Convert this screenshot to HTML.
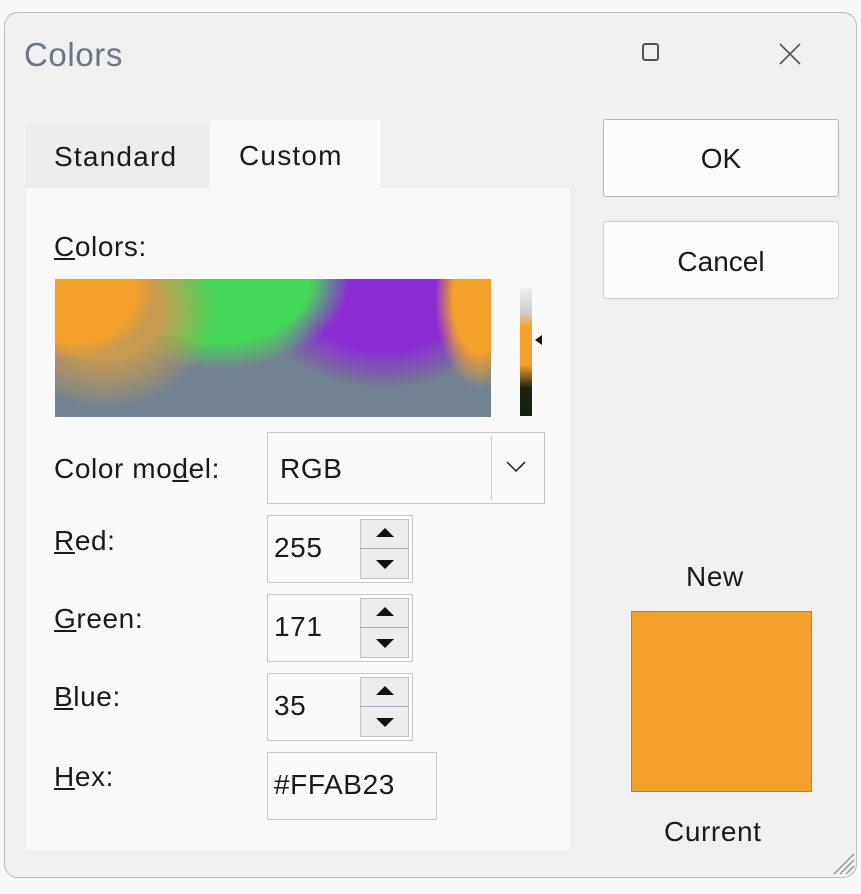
<!DOCTYPE html>
<html><head><style>
body{margin:0;width:861px;height:894px;background:#f7f7f7;font-family:"Liberation Sans",sans-serif;position:relative;overflow:hidden}
.a{position:absolute}
.win{left:4px;top:12px;width:853px;height:866px;background:#f0f0f0;border:1px solid #bbb;border-radius:14px;box-sizing:border-box}
.t{font-size:28px;letter-spacing:0.6px;color:#1a1a1a}
.box{background:#fafafa;border:1px solid #c8c8c8;box-sizing:border-box}
.btn{background:#fbfbfb;border:1px solid #b0b8c0;border-radius:3px;box-sizing:border-box;text-align:center;font-size:28px;color:#1a1a1a}
.spin{background:#ececec;border:1px solid #c4c4c4;box-sizing:border-box}
u{text-decoration:underline}
</style></head><body>
<div class="a win"></div>
<div class="a" style="left:24px;top:36px;font-size:33px;letter-spacing:0.6px;color:#6a7684">Colors</div>
<div class="a" style="left:642px;top:43px;width:17px;height:18px;border:2px solid #555;border-radius:3px;box-sizing:border-box"></div>
<svg class="a" style="left:778px;top:42px" width="24" height="24"><path d="M2 2L22 22M22 2L2 22" stroke="#555" stroke-width="1.6"/></svg>
<div class="a" style="left:26px;top:125px;width:183px;height:64px;background:#ececec"></div>
<div class="a" style="left:209px;top:120px;width:172px;height:70px;background:#f9f9f9"></div>
<div class="a" style="left:26px;top:188px;width:544px;height:662px;background:#f9f9f9"></div>
<div class="a t" style="left:54px;top:141px;letter-spacing:1.2px">Standard</div>
<div class="a t" style="left:239px;top:140px;letter-spacing:1.2px">Custom</div>
<div class="a btn" style="left:603px;top:119px;width:236px;height:78px;line-height:78px">OK</div>
<div class="a btn" style="left:603px;top:221px;width:236px;height:78px;line-height:80px;border-color:#d0d0d0">Cancel</div>
<div class="a t" style="left:54px;top:231px"><u>C</u>olors:</div>
<div class="a" style="left:55px;top:279px;width:436px;height:138px;background:
radial-gradient(ellipse 80px 70px at 20px 10px,#f4a12c 75%,transparent 100%),
radial-gradient(ellipse 45px 90px at 425px 20px,#f4a12c 60%,transparent 100%),
radial-gradient(ellipse 110px 100px at 50px 30px,#c89a50 50%,transparent 100%),
radial-gradient(ellipse 130px 90px at 165px 0px,#46d858 70%,transparent 100%),
radial-gradient(ellipse 140px 110px at 330px 0px,#8a2cd4 65%,transparent 100%),
#738290"></div>
<div class="a" style="left:520px;top:288px;width:12px;height:128px;background:linear-gradient(#eee 0%,#ccc 20%,#f4a12c 30%,#f4a12c 60%,#221 78%,#121 100%)"></div>
<svg class="a" style="left:535px;top:335px" width="8" height="10"><path d="M0 5L7 0V10Z" fill="#111"/></svg>
<div class="a t" style="left:54px;top:453px">Color mo<u>d</u>el:</div>
<div class="a box" style="left:267px;top:432px;width:278px;height:72px"></div>
<div class="a t" style="left:280px;top:453px">RGB</div>
<div class="a" style="left:491px;top:436px;width:50px;height:64px;border-left:1px solid #ccc"></div>
<svg class="a" style="left:506px;top:461px" width="20" height="12"><path d="M1 1L10 10L19 1" stroke="#333" stroke-width="1.6" fill="none"/></svg>
<div class="a t" style="left:54px;top:525px"><u>R</u>ed:</div>
<div class="a t" style="left:54px;top:603px"><u>G</u>reen:</div>
<div class="a t" style="left:54px;top:681px"><u>B</u>lue:</div>
<div class="a t" style="left:54px;top:761px"><u>H</u>ex:</div>
<div class="a box" style="left:267px;top:515px;width:146px;height:68px"></div>
<div class="a box" style="left:267px;top:594px;width:146px;height:68px"></div>
<div class="a box" style="left:267px;top:673px;width:146px;height:68px"></div>
<div class="a t" style="left:274px;top:532px">255</div>
<div class="a t" style="left:274px;top:611px">171</div>
<div class="a t" style="left:274px;top:690px">35</div>
<div class="a spin" style="left:360px;top:519px;width:49px;height:60px"></div>
<div class="a spin" style="left:360px;top:598px;width:49px;height:60px"></div>
<div class="a spin" style="left:360px;top:677px;width:49px;height:60px"></div>
<div class="a" style="left:360px;top:548px;width:49px;height:1px;background:#aab"></div>
<div class="a" style="left:360px;top:627px;width:49px;height:1px;background:#aab"></div>
<div class="a" style="left:360px;top:706px;width:49px;height:1px;background:#aab"></div>
<svg class="a" style="left:374px;top:526px" width="22" height="204">
<path d="M2 11L11 2L20 11Z M2 34L11 43L20 34Z" fill="#111"/>
<path d="M2 90L11 81L20 90Z M2 113L11 122L20 113Z" fill="#111"/>
<path d="M2 169L11 160L20 169Z M2 192L11 201L20 192Z" fill="#111"/>
</svg>
<div class="a box" style="left:267px;top:752px;width:170px;height:68px"></div>
<div class="a t" style="left:274px;top:769px">#FFAB23</div>
<div class="a t" style="left:686px;top:561px">New</div>
<div class="a" style="left:631px;top:611px;width:181px;height:181px;background:#f4a12c;border:1px solid #888;box-sizing:border-box"></div>
<div class="a t" style="left:664px;top:816px">Current</div>
<svg class="a" style="left:828px;top:848px" width="28" height="28"><path d="M26 6L6 26M26 12L12 26M26 18L18 26" stroke="#999" stroke-width="1.5"/></svg>
</body></html>
